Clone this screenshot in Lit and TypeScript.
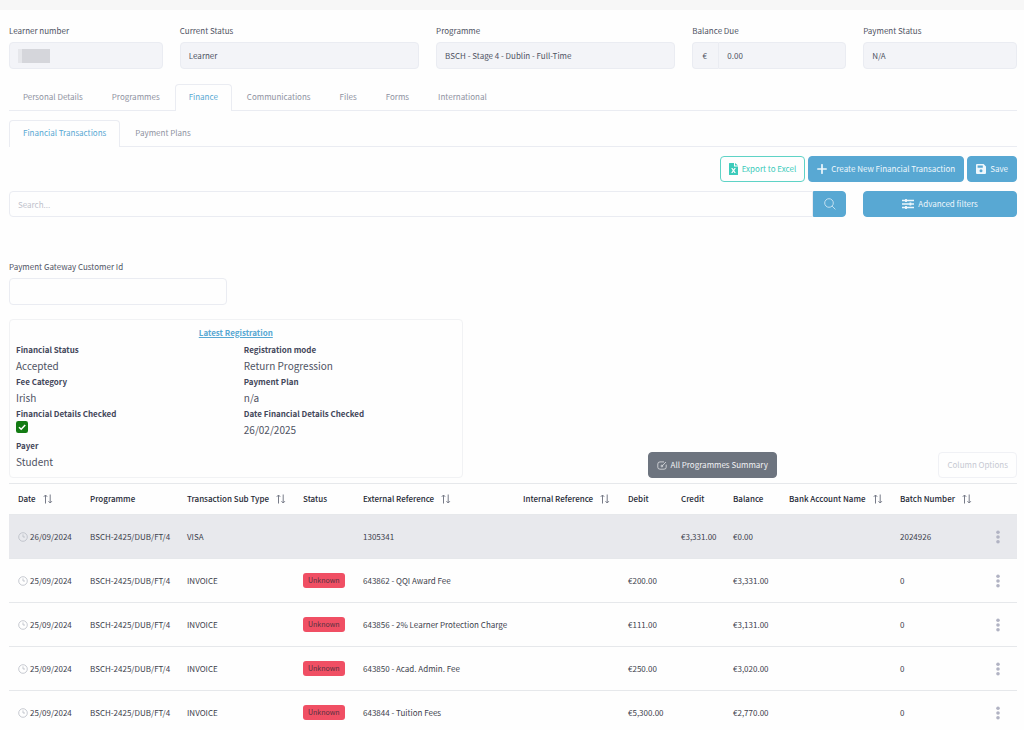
import { LitElement, html, css, svg, nothing } from "lit";
import { customElement } from "lit/decorators.js";

interface Transaction {
  date: string;
  programme: string;
  subType: string;
  status: string;
  external: string;
  internal: string;
  debit: string;
  credit: string;
  balance: string;
  bank: string;
  batch: string;
  selected?: boolean;
}

const invoice = (external: string, debit: string, balance: string): Transaction => ({
  date: "25/09/2024",
  programme: "BSCH-2425/DUB/FT/4",
  subType: "INVOICE",
  status: "Unknown",
  external,
  internal: "",
  debit,
  credit: "",
  balance,
  bank: "",
  batch: "0",
});

const TRANSACTIONS: Transaction[] = [
  {
    date: "26/09/2024",
    programme: "BSCH-2425/DUB/FT/4",
    subType: "VISA",
    status: "",
    external: "1305341",
    internal: "",
    debit: "",
    credit: "€3,331.00",
    balance: "€0.00",
    bank: "",
    batch: "2024926",
    selected: true,
  },
  invoice("643862 - QQI Award Fee", "€200.00", "€3,331.00"),
  invoice("643856 - 2% Learner Protection Charge", "€111.00", "€3,131.00"),
  invoice("643850 - Acad. Admin. Fee", "€250.00", "€3,020.00"),
  invoice("643844 - Tuition Fees", "€5,300.00", "€2,770.00"),
];

const COLUMNS: { label: string; cls: string; sortable?: boolean }[] = [
  { label: "Date", cls: "c-date", sortable: true },
  { label: "Programme", cls: "c-prog" },
  { label: "Transaction Sub Type", cls: "c-type", sortable: true },
  { label: "Status", cls: "c-status" },
  { label: "External Reference", cls: "c-ext", sortable: true },
  { label: "Internal Reference", cls: "c-int", sortable: true },
  { label: "Debit", cls: "c-debit" },
  { label: "Credit", cls: "c-credit" },
  { label: "Balance", cls: "c-balance" },
  { label: "Bank Account Name", cls: "c-bank", sortable: true },
  { label: "Batch Number", cls: "c-batch", sortable: true },
];

const TABS = ["Personal Details", "Programmes", "Finance", "Communications", "Files", "Forms", "International"];
const SUBTABS = ["Financial Transactions", "Payment Plans"];

const icon = (box: string, cls: string, body: unknown) =>
  html`<svg class=${cls} viewBox=${box} aria-hidden="true">${body}</svg>`;

const sortIcon = () =>
  icon("0 0 10 10", "sort", svg`<path d="M2.5 9.500V1M.8 2.800 2.500 1l1.700 1.800M7.200.5V9M5.500 7.200 7.200 9l1.700-1.800" fill="none" stroke="currentColor" stroke-width="1"/>`);
const clockIcon = () =>
  icon("0 0 10 10", "clock", svg`<circle cx="5" cy="5" r="4.300" fill="none" stroke="currentColor" stroke-width=".8"/><path d="M5 2.400V5h2" fill="none" stroke="currentColor" stroke-width=".8"/>`);
const excelIcon = () =>
  icon("0 0 9 12", "excel", svg`<path fill="currentColor" fill-rule="evenodd" d="M.6 0H5v3.400h4v8a.6.6 0 0 1-.6.6H.6a.6.6 0 0 1-.6-.6V.6A.6.6 0 0 1 .6 0ZM6 0l3 2.600H6ZM2.200 5l1.500 2.500L2.200 10h1.300l1-1.600 1 1.600h1.300L5.300 7.500 6.800 5H5.500l-1 1.600L3.500 5Z"/>`);
const plusIcon = () => icon("0 0 10 10", "plus", svg`<path d="M5 .8v8.400M.8 5h8.400" stroke="currentColor" stroke-width="1.700" stroke-linecap="round"/>`);
const saveIcon = () =>
  icon("0 0 10 10", "plus", svg`<path fill="currentColor" fill-rule="evenodd" d="M1 0h6.600L10 2.400V9a1 1 0 0 1-1 1H1a1 1 0 0 1-1-1V1a1 1 0 0 1 1-1Zm.6 1.600v2.200h5.200V1.600Zm3.400 3.600a1.500 1.500 0 1 0 0 3 1.500 1.500 0 0 0 0-3Z"/>`);
const searchIcon = () => icon("0 0 12 12", "search", svg`<circle cx="5" cy="5" r="4.300" fill="none" stroke="currentColor" stroke-width=".7"/><path d="m8.100 8.100 3.300 3.300" stroke="currentColor" stroke-width=".7"/>`);
const slidersIcon = () =>
  icon("0 0 12 10", "sliders", svg`<path d="M0 1.500h12M0 5h12M0 8.500h12" stroke="currentColor" stroke-width="1.300"/><path d="M4 0v3M8.400 3.500v3M4 7v3" stroke="currentColor" stroke-width="1.800"/>`);
const gaugeIcon = () =>
  icon("0 0 10 9", "gauge", svg`<path d="M7 .9H3Q.8.9.8 3v3.200Q.8 8.200 3 8.200h4q2.200 0 2.200-2V3.600M8.900 1 5.600 4.600" fill="none" stroke="currentColor" stroke-width=".7"/><circle cx="4.900" cy="5" r=".9" fill="none" stroke="currentColor" stroke-width=".7"/>`);
const checkIcon = () =>
  icon("0 0 12 12", "check", svg`<rect width="12" height="12" rx="2.200" fill="#137b13"/><path d="m3 6.200 2.200 2.100 4-4.400" fill="none" stroke="#fff" stroke-width="1.500"/>`);
const dotsIcon = () =>
  icon("0 0 4 14", "dots", svg`<circle cx="2" cy="2.300" r="1.800"/><circle cx="2" cy="7" r="1.800"/><circle cx="2" cy="11.700" r="1.800"/>`);

@customElement("app-root")
export class AppRoot extends LitElement {
  static styles = css`
    :host {
      display: block;
      min-height: 100vh;
      background: #fefefe;
      color: #4f5363;
      font-family: "Noto Sans CJK SC", "Noto Sans", sans-serif;
      font-size: 8px;
      line-height: 12px;
      --line: #eaecf2;
      --blue: #58a8d3;
    }
    *, *::before { box-sizing: border-box; }
    input, button { font: inherit; color: inherit; margin: 0; }
    svg { display: block; flex: none; }
    .strip { height: 10px; background: #f7f7f7; }
    main { padding: 0 7px 0 9px; }
    .grid { display: grid; grid-template-columns: repeat(12, minmax(0, 1fr)); column-gap: 17px; }
    .s2 { grid-column: span 2; }
    .s3 { grid-column: span 3; }
    .s10 { grid-column: span 10; }
    .field { display: flex; flex-direction: column; gap: 5px; }
    .summary { padding-top: 15px; }
    .box {
      width: 100%; height: 27px; padding: 0 8px; min-width: 0;
      border: 1px solid var(--line); border-radius: 4px; background: #fefefe; outline: none;
    }
    .box[readonly] { background: #f3f4f8; }
    .box::placeholder { color: #bfc2cc; opacity: 1; }
    .group { display: flex; }
    .addon {
      flex: none; width: 26px; padding-right: 2px; display: grid; place-items: center;
      border: 1px solid var(--line); border-right: 0; border-radius: 4px 0 0 4px; background: #f3f4f8;
    }
    .addon + .box { border-radius: 0 4px 4px 0; }
    .masked { display: flex; align-items: center; background: #f3f4f8; }
    .mask { width: 32px; height: 14px; background: linear-gradient(90deg, #e6e7eb 0 4px, #d5d6db 4px); }
    .tabs { display: flex; gap: 1px; height: 27px; border-bottom: 1px solid var(--line); }
    .main-tabs { margin-top: 15px; }
    .sub-tabs { margin-top: 9px; }
    .tab {
      padding: 0 13px 2px; height: 27px; border: 1px solid transparent; border-bottom: 0; border-radius: 4px 4px 0 0;
      background: none; color: #8e92a1; white-space: nowrap;
    }
    .tab.on { color: var(--blue); background: #fefefe; border-color: var(--line); }
    .actions { display: flex; justify-content: flex-end; gap: 3px; margin: 9px 0; }
    .btn {
      height: 26px; padding: 0 8px; display: flex; align-items: center; justify-content: center; gap: 4px;
      border: 1px solid var(--blue); border-radius: 4px; background: var(--blue); color: #eef7fc; white-space: nowrap;
    }
    .btn.outline { background: #fefefe; border-color: #5fd3c6; color: #3ccbbb; }
    .btn.grey { background: #6d747f; border-color: #6d747f; color: #f1f2f4; }
    .btn.faint { background: #fefefe; border-color: #f0f1f5; color: #c6c9d2; }
    .search-box { border-radius: 4px 0 0 4px; height: 26px; }
    .search-btn { width: 33px; flex: none; border-radius: 0 4px 4px 0; padding: 0; }
    .gateway { margin-top: 44px; width: 218px; }
    .overview { display: flex; align-items: flex-end; margin-top: 14px; }
    .card { width: 45%; border: 1px solid #f1f2f4; border-radius: 4px; padding: 5px 6px 6px; }
    .card-title { text-align: center; line-height: 16px; }
    .card-title a { color: var(--blue); font-weight: 700; }
    .facts { display: grid; grid-template-columns: 1fr 1fr; column-gap: 16px; margin: 2px 0 0; }
    .fact dt { font-weight: 700; color: #43475a; line-height: 14px; }
    .fact dd { margin: 0; font-size: 10px; line-height: 18px; height: 18px; }
    .rest { flex: 1; display: flex; justify-content: space-between; padding-left: 185px; }
    table { width: 100%; margin-top: 5px; table-layout: fixed; border-collapse: separate; border-spacing: 0; border-top: 1px solid #e6e8eb; color: #3d414c; }
    th, td { padding: 0 0 0 9px; text-align: left; white-space: nowrap; border-bottom: 1px solid #e6e8eb; }
    th { height: 31px; font-weight: 500; color: #252935; }
    td { height: 44px; }
    .th { display: flex; align-items: center; gap: 7px; }
    .c-date { width: 72px; } .c-prog { width: 97px; } .c-type { width: 116px; } .c-status { width: 60px; }
    .c-ext { width: 160px; } .c-int { width: 105px; } .c-debit { width: 53px; } .c-credit { width: 52px; }
    .c-balance { width: 56px; } .c-bank { width: 111px; } .c-batch { width: 89px; } .c-menu { width: 37px; }
    .sel td { background: #e8e9ed; }
    .date { display: flex; align-items: center; gap: 2px; }
    .badge { display: inline-block; padding: 0 5px; border-radius: 3px; background: #f04f64; color: #57303f; font-size: 7px; line-height: 15px; vertical-align: middle; }
    .menu { border: 0; background: none; padding: 0 7px; display: block; }
    .sort { width: 10px; height: 10px; color: #777b88; }
    .clock { width: 10px; height: 10px; color: #b9bcc5; }
    .excel { width: 9px; height: 12px; }
    .plus { width: 10px; height: 10px; }
    .search { width: 12px; height: 12px; }
    .sliders { width: 12px; height: 10px; }
    .gauge { width: 10px; height: 9px; }
    .check { width: 12px; height: 12px; }
    .dots { width: 4px; height: 14px; fill: #b1b3c3; }
  `;

  private fact(name: string, value: unknown) {
    return html`<div class="fact"><dt>${name}</dt><dd>${value}</dd></div>`;
  }

  private row(t: Transaction) {
    return html`<tr class=${t.selected ? "sel" : ""}>
      <td><span class="date">${clockIcon()}${t.date}</span></td>
      <td>${t.programme}</td>
      <td>${t.subType}</td>
      <td>${t.status ? html`<span class="badge">${t.status}</span>` : nothing}</td>
      <td>${t.external}</td>
      <td>${t.internal}</td>
      <td>${t.debit}</td>
      <td>${t.credit}</td>
      <td>${t.balance}</td>
      <td>${t.bank}</td>
      <td>${t.batch}</td>
      <td><button class="menu" aria-label="Row actions">${dotsIcon()}</button></td>
    </tr>`;
  }

  render() {
    return html`
      <div class="strip"></div>
      <main>
        <section class="grid summary">
          <div class="field s2"><span>Learner number</span><div class="box masked"><span class="mask"></span></div></div>
          <div class="field s3"><label for="status">Current Status</label><input id="status" class="box" readonly .value=${"Learner"} /></div>
          <div class="field s3"><label for="prog">Programme</label><input id="prog" class="box" readonly .value=${"BSCH - Stage 4 - Dublin - Full-Time"} /></div>
          <div class="field s2"><label for="due">Balance Due</label><div class="group"><span class="addon">€</span><input id="due" class="box" readonly .value=${"0.00"} /></div></div>
          <div class="field s2"><label for="pay">Payment Status</label><input id="pay" class="box" readonly .value=${"N/A"} /></div>
        </section>

        <nav class="tabs main-tabs" role="tablist">
          ${TABS.map((t) => html`<button role="tab" class="tab ${t === "Finance" ? "on" : ""}">${t}</button>`)}
        </nav>
        <nav class="tabs sub-tabs" role="tablist">
          ${SUBTABS.map((t, i) => html`<button role="tab" class="tab ${i === 0 ? "on" : ""}">${t}</button>`)}
        </nav>

        <div class="actions">
          <button class="btn outline">${excelIcon()}Export to Excel</button>
          <button class="btn">${plusIcon()}Create New Financial Transaction</button>
          <button class="btn">${saveIcon()}Save</button>
        </div>

        <div class="grid">
          <div class="group s10">
            <input class="box search-box" type="text" placeholder="Search..." aria-label="Search" />
            <button class="btn search-btn" aria-label="Search">${searchIcon()}</button>
          </div>
          <button class="btn s2">${slidersIcon()}Advanced filters</button>
        </div>

        <div class="field gateway"><label for="gw">Payment Gateway Customer Id</label><input id="gw" class="box" type="text" /></div>

        <section class="overview">
          <div class="card">
            <div class="card-title"><a href="#">Latest Registration</a></div>
            <dl class="facts">
              ${this.fact("Financial Status", "Accepted")}
              ${this.fact("Registration mode", "Return Progression")}
              ${this.fact("Fee Category", "Irish")}
              ${this.fact("Payment Plan", "n/a")}
              ${this.fact("Financial Details Checked", checkIcon())}
              ${this.fact("Date Financial Details Checked", "26/02/2025")}
              ${this.fact("Payer", "Student")}
            </dl>
          </div>
          <div class="rest">
            <button class="btn grey">${gaugeIcon()}All Programmes Summary</button>
            <button class="btn faint">Column Options</button>
          </div>
        </section>

        <table>
          <thead>
            <tr>
              ${COLUMNS.map((c) => html`<th class=${c.cls}><span class="th">${c.label}${c.sortable ? sortIcon() : nothing}</span></th>`)}
              <th class="c-menu"></th>
            </tr>
          </thead>
          <tbody>${TRANSACTIONS.map((t) => this.row(t))}</tbody>
        </table>
      </main>
    `;
  }
}
